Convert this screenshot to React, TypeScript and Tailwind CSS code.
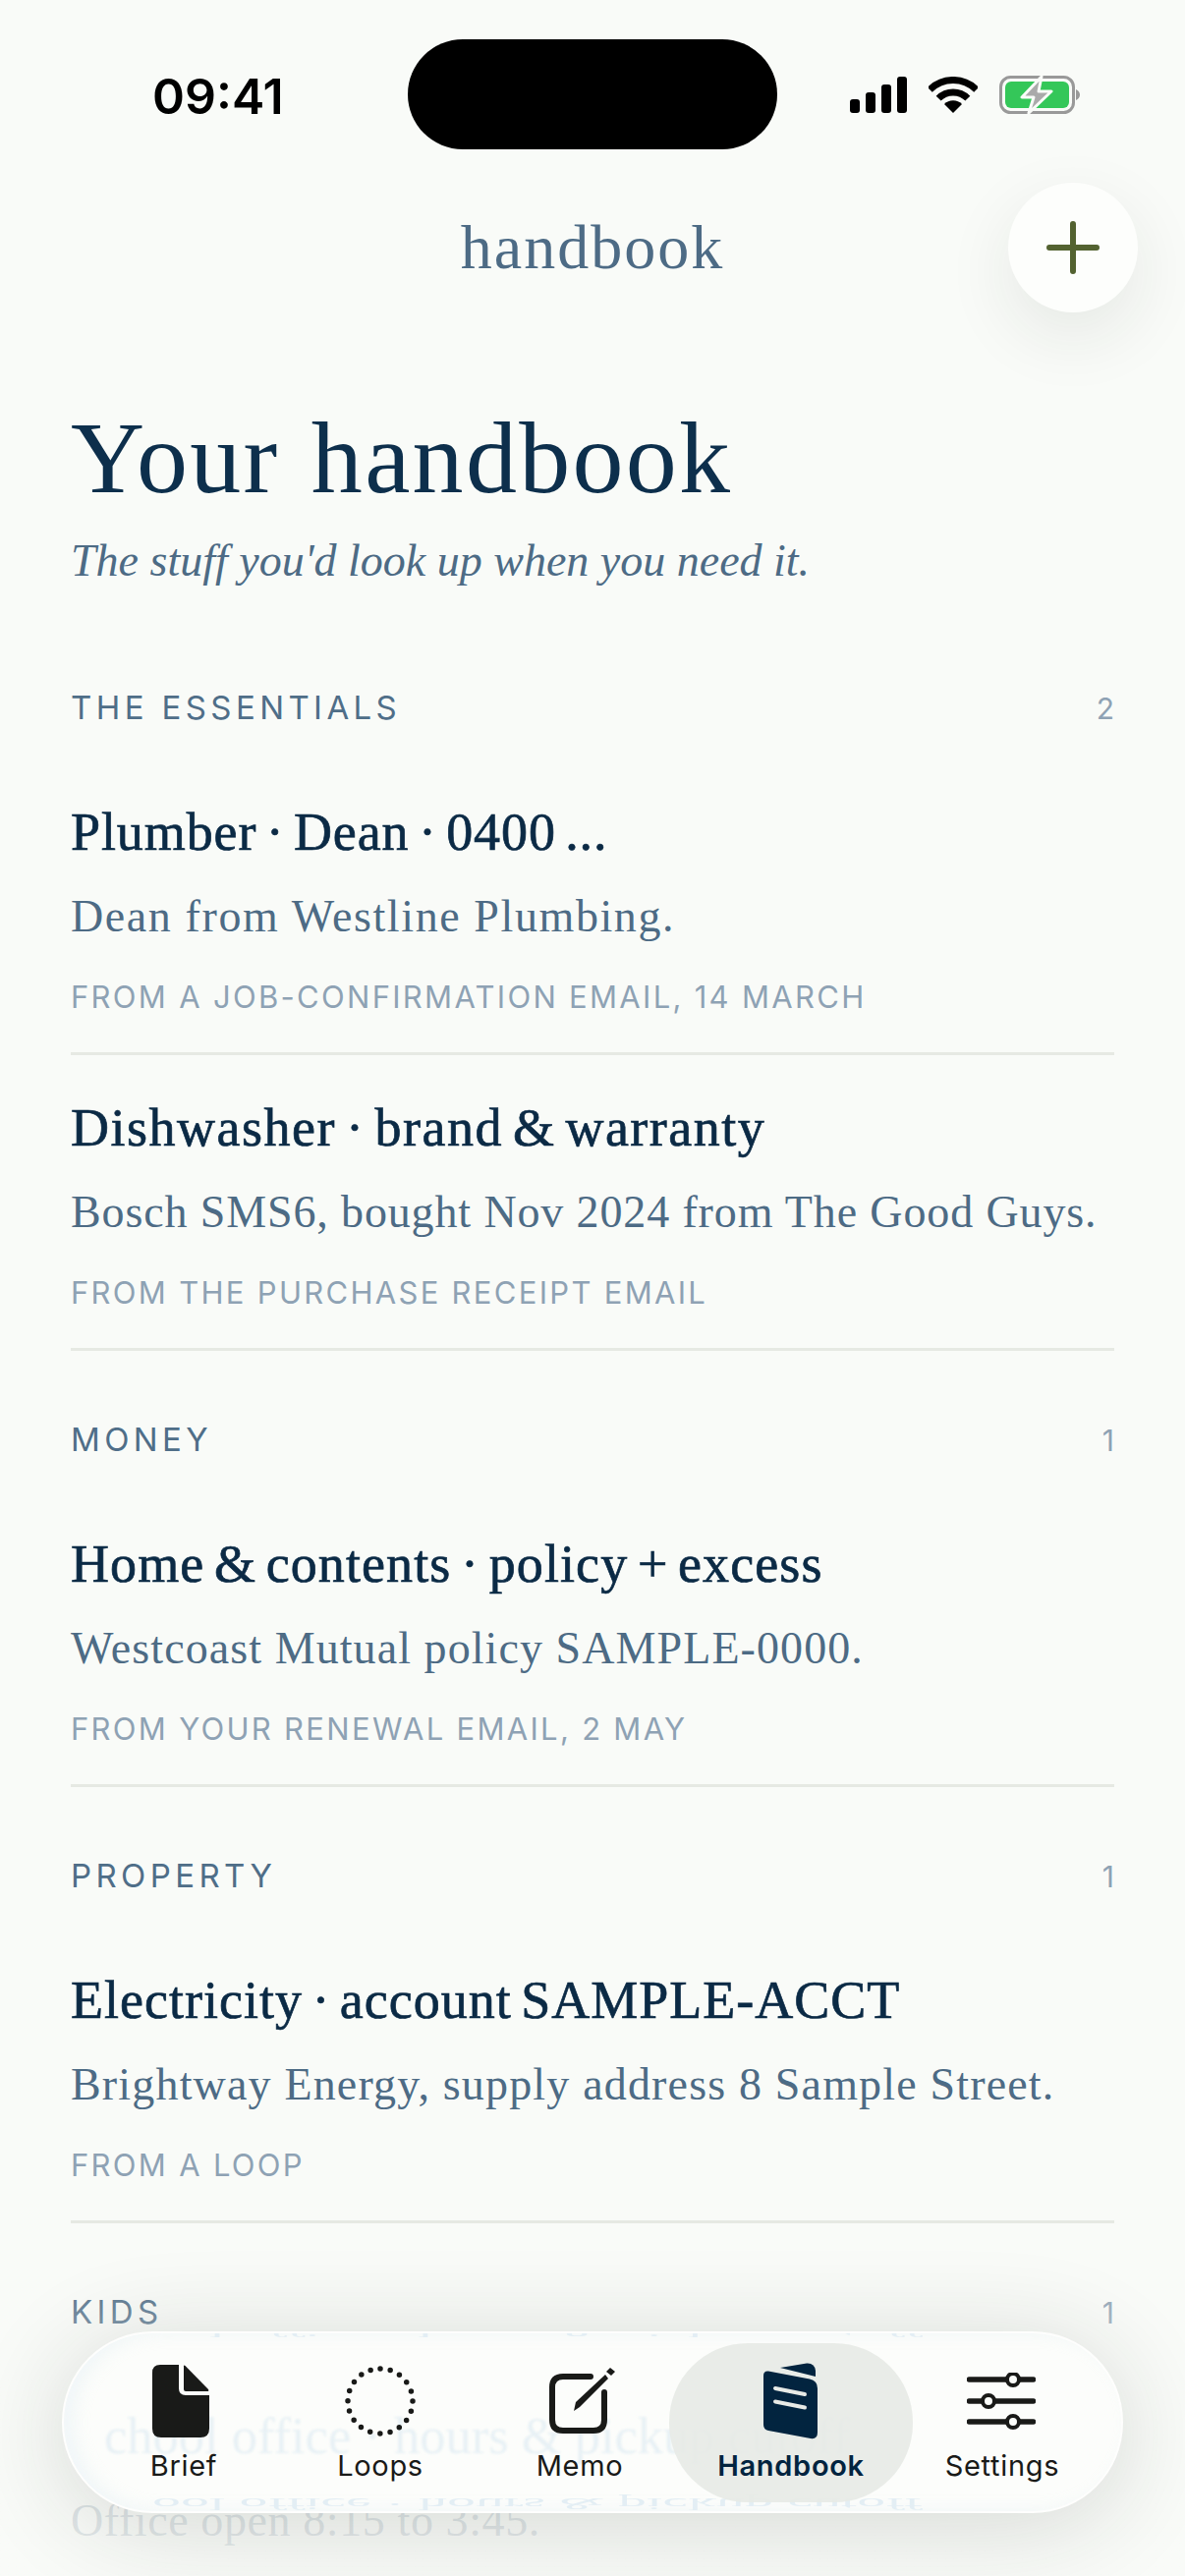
import React from "react";

const serif = "font-['Liberation_Serif',serif]";
const sans = "font-['Inter',sans-serif]";

function SignalIcon() {
  return (
    <svg width="58" height="37" viewBox="0 0 58 37" fill="#000">
      <rect x="0" y="23" width="10" height="14" rx="3" />
      <rect x="16" y="16" width="10" height="21" rx="3" />
      <rect x="32" y="8" width="10" height="29" rx="3" />
      <rect x="48" y="0" width="10" height="37" rx="3" />
    </svg>
  );
}

function WifiIcon() {
  return (
    <svg width="50" height="37" viewBox="0 0 50 37" fill="none" stroke="#000" strokeWidth="7">
      <path d="M1.3 13.3A33.5 33.5 0 0 1 48.7 13.3" />
      <path d="M10.15 22.15A21 21 0 0 1 39.85 22.15" />
      <path d="M25 37L16 28A12.7 12.7 0 0 1 34 28Z" fill="#000" stroke="none" />
    </svg>
  );
}

function BatteryIcon() {
  return (
    <svg width="82" height="39" viewBox="0 0 82 39" fill="none">
      <rect x="1.5" y="1.5" width="74" height="36" rx="10" stroke="#999" strokeWidth="3" />
      <rect x="6" y="6" width="65" height="27" rx="6" fill="#34c759" />
      <path d="M78 14v11c2.500-1 4-3 4-5.500s-1.500-4.500-4-5.500z" fill="#999" />
      <path d="M43 1L23 22H35L30 38L53 16H40Z" fill="#aaa" stroke="#f9fbf8" strokeWidth="3" strokeLinejoin="round" />
    </svg>
  );
}

function BriefIcon() {
  return (
    <svg width="58" height="74" viewBox="0 0 58 74" fill="#191a18">
      <path d="M8 0H27V24Q27 31 34 31H58V65Q58 74 49 74H9Q0 74 0 65V8Q0 0 8 0Z" />
      <path d="M32 1.500Q32 0 33.500 1L57 25Q58 27 56 27H34Q32 27 32 25Z" />
    </svg>
  );
}

function LoopsIcon() {
  return (
    <svg width="72" height="72" viewBox="0 0 72 72" fill="none">
      <circle
        cx="36"
        cy="36"
        r="33"
        stroke="#191a18"
        strokeWidth="5.500"
        strokeLinecap="round"
        strokeDasharray="0 10.367"
        transform="rotate(-90 36 36)"
      />
    </svg>
  );
}

function MemoIcon() {
  return (
    <svg width="72" height="72" viewBox="0 0 72 72" fill="none">
      <path
        d="M44 11H16Q5 11 5 22V55Q5 66 16 66H47Q58 66 58 55V27"
        stroke="#191a18"
        strokeWidth="6"
        strokeLinecap="round"
      />
      <path d="M27 46L29 37L59 9L62 13L33 42Z" fill="#191a18" />
      <path d="M64 2L69 6L65 10L60 6Z" fill="#191a18" />
    </svg>
  );
}

function HandbookIcon() {
  return (
    <svg width="56" height="78" viewBox="0 0 56 78" fill="#02243f">
      <path d="M17 5L44 0.500Q52 0 53 8V14Z" />
      <path d="M5 8.500L47 16.500Q55 18 55 26V71Q55 78 48 77L5 69Q0 68 0 63V13Q0 8 5 8.500Z" />
      <path d="M12 26L42 32M12 39.500L42 45.500" stroke="#e7eae6" strokeWidth="4" strokeLinecap="round" />
    </svg>
  );
}

function SettingsIcon() {
  return (
    <svg width="70" height="58" viewBox="0 0 70 58" fill="none" stroke="#191a18">
      <path d="M2.500 7H67.500M2.500 29H67.500M2.500 50H67.500" strokeWidth="5.500" strokeLinecap="round" />
      <circle cx="47" cy="7" r="6" fill="#fbfdfa" strokeWidth="4" />
      <circle cx="22" cy="29" r="6" fill="#fbfdfa" strokeWidth="4" />
      <circle cx="47" cy="50" r="6" fill="#fbfdfa" strokeWidth="4" />
    </svg>
  );
}

const sections = [
  {
    label: "THE ESSENTIALS",
    items: [
      {
        title: "Plumber · Dean · 0400 ...",
        titleFit: "tracking-[0.9px]",
        desc: "Dean from Westline Plumbing.",
        descFit: "tracking-[1.6px]",
        meta: "FROM A JOB-CONFIRMATION EMAIL, 14 MARCH",
      },
      {
        title: "Dishwasher · brand & warranty",
        titleFit: "tracking-[1.5px]",
        desc: "Bosch SMS6, bought Nov 2024 from The Good Guys.",
        descFit: "tracking-[0.87px]",
        meta: "FROM THE PURCHASE RECEIPT EMAIL",
      },
    ],
  },
  {
    label: "MONEY",
    items: [
      {
        title: "Home & contents · policy + excess",
        titleFit: "tracking-[1.1px]",
        desc: "Westcoast Mutual policy SAMPLE-0000.",
        descFit: "tracking-[1.08px]",
        meta: "FROM YOUR RENEWAL EMAIL, 2 MAY",
      },
    ],
  },
  {
    label: "PROPERTY",
    items: [
      {
        title: "Electricity · account SAMPLE-ACCT",
        titleFit: "tracking-[1px]",
        desc: "Brightway Energy, supply address 8 Sample Street.",
        descFit: "tracking-[1.17px]",
        meta: "FROM A LOOP",
      },
    ],
  },
  {
    label: "KIDS",
    items: [
      {
        title: "School office · hours & pickup cutoff",
        titleFit: "tracking-[1.1px]",
        desc: "Office open 8:15 to 3:45.",
        descFit: "tracking-[0.6px]",
        meta: "",
      },
    ],
  },
];

const tabs = [
  { label: "Brief", icon: <BriefIcon />, box: "ml-[42px] w-[160px]", nudge: "-ml-[6px]" },
  { label: "Loops", icon: <LoopsIcon />, box: "ml-[40px] w-[160px]", nudge: "-ml-[1px]" },
  { label: "Memo", icon: <MemoIcon />, box: "ml-[43px] w-[160px]", nudge: "ml-[6px]" },
  { label: "Handbook", icon: <HandbookIcon />, box: "ml-[11px] w-[248px]", nudge: "-ml-[1px]", active: true },
  { label: "Settings", icon: <SettingsIcon />, box: "ml-[11px] w-[160px]", nudge: "-ml-[3px]" },
];

export default function App() {
  return (
    <div className="relative w-[1206px] h-[2622px] overflow-hidden bg-[#f9fbf8]">
      {/* status bar */}
      <div className="flex items-center pt-[40px] h-[152px]">
        <span className={`${sans} ml-[155px] w-[133px] mt-[3px] text-[50px] leading-[60px] font-semibold text-black`}>09:41</span>
        <div className="ml-[127px] w-[376px] h-[112px] rounded-[56px] bg-black" />
        <div className="ml-[74px] flex items-center gap-[22px]">
          <SignalIcon />
          <WifiIcon />
          <BatteryIcon />
        </div>
      </div>

      {/* header */}
      <div className="relative mt-[34px] h-[132px] flex items-center justify-center">
        <span className={`${serif} text-[64px] leading-[70px] tracking-[2px] text-[#4d6b85]`}>handbook</span>
        <button className="absolute right-[48px] top-0 w-[132px] h-[132px] rounded-full bg-[#fdfefc] flex items-center justify-center shadow-[0_24px_70px_rgba(30,40,30,0.09)]">
          <svg width="54" height="54" viewBox="0 0 54 54" stroke="#536230" strokeWidth="6" strokeLinecap="round">
            <path d="M3 27H51M27 3V51" />
          </svg>
        </button>
      </div>

      <div className="px-[72px]">
        <h1 className={`${serif} mt-[93px] text-[104px] leading-[110px] tracking-[2.3px] text-[#0d2f4c] [word-spacing:4px]`}>
          Your handbook
        </h1>
        <p className={`${serif} mt-[20px] text-[46px] leading-[60px] italic text-[#4d6b85]`}>
          The stuff you'd look up when you need it.
        </p>

        <div className="pt-[29px]">
          {sections.map((section) => (
            <div key={section.label} className="mt-[71px]">
              <div className={`${sans} flex items-center justify-between h-[40px] mb-[32px]`}>
                <span className="text-[33px] tracking-[4.4px] text-[#4f6e88]">{section.label}</span>
                <span className="text-[30px] text-[#8ea2b4]">{section.items.length}</span>
              </div>
              {section.items.map((item) => (
                <div key={item.title} className="pt-[42px] pb-[36px] border-b-[3px] border-[#e6e9e3]">
                  <div className={`${serif} ${item.titleFit} text-[54px] leading-[64px] [word-spacing:-5px] text-[#0b2a45] [-webkit-text-stroke:0.7px_#0b2a45]`}>
                    {item.title}
                  </div>
                  <div className={`${serif} ${item.descFit} mt-[24px] text-[46px] leading-[60px] text-[#4d6b85]`}>
                    {item.desc}
                  </div>
                  {item.meta && (
                    <div className={`${sans} mt-[32px] text-[31px] leading-[40px] tracking-[2.3px] text-[#8ea2b4]`}>
                      {item.meta}
                    </div>
                  )}
                </div>
              ))}
            </div>
          ))}
        </div>
      </div>

      {/* content fades out under the tab bar */}
      <div className="absolute left-0 right-0 bottom-0 h-[310px] bg-linear-to-b from-[#f9fbf8]/0 via-[#f9fbf8]/75 to-[#f9fbf8]/90" />

      {/* floating tab bar */}
      <div className="absolute left-[63px] top-[2373px] w-[1080px] h-[185px] rounded-[92px] bg-[#fcfdfb] border-2 border-white/60 shadow-[0_12px_100px_rgba(30,40,30,0.16),inset_10px_0_18px_rgba(215,232,242,0.3)] overflow-hidden flex items-center">
        <div aria-hidden className={`${serif} absolute left-[41px] top-[74px] text-[52.500px] leading-[60px] whitespace-nowrap text-[#e8f1f5] blur-[1px]`}>
          chool office · hours &amp; pickup cutoff
        </div>
        <div aria-hidden className={`${serif} absolute left-[90px] top-[-17px] text-[58px] leading-[30px] whitespace-nowrap text-[#e3eef4] [transform:scaleY(-0.3)]`}>
          ool office · hours &amp; pickup cutoff
        </div>
        <div aria-hidden className={`${serif} absolute left-[90px] bottom-[-2px] h-[18px] text-[58px] leading-[18px] whitespace-nowrap text-[#e3eef4] [transform:scaleY(-0.3)]`}>
          ool office · hours &amp; pickup cutoff
        </div>
        {tabs.map((tab) => (
          <div
            key={tab.label}
            className={`${tab.box} relative h-[162px] rounded-[80px] flex flex-col items-center ${tab.active ? "bg-[#e7eae6]/90" : ""}`}
          >
            <div className={`${tab.nudge} h-[78px] mt-[20px] flex items-center justify-center`}>{tab.icon}</div>
            <span
              className={`${sans} mt-[9px] text-[29px] leading-[36px] tracking-[0.7px] ${tab.active ? "font-semibold text-[#02243f]" : "text-[#191a18]"}`}
            >
              {tab.label}
            </span>
          </div>
        ))}
      </div>
    </div>
  );
}
